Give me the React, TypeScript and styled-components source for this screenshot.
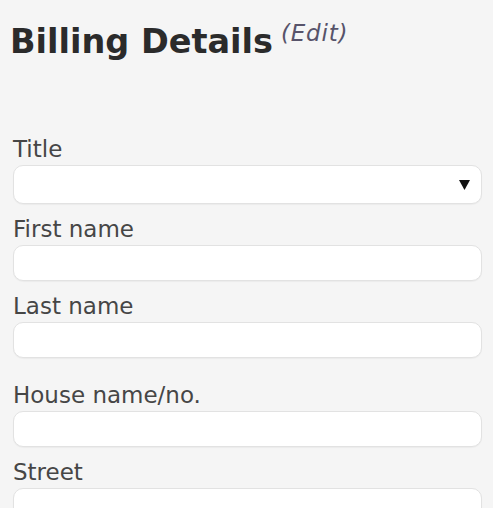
import React from "react";
import styled, { createGlobalStyle } from "styled-components";

const GlobalStyle = createGlobalStyle`
  html, body {
    margin: 0;
    padding: 0;
    background: #f5f5f5;
  }
  body {
    font-family: "DejaVu Sans", Verdana, sans-serif;
  }
`;

const Page = styled.div`
  width: 493px;
  height: 508px;
  overflow: hidden;
  box-sizing: border-box;
  padding: 15px 11px 0 13px;
  display: flex;
  flex-direction: column;
`;

const Heading = styled.h2`
  margin: 0 0 0 -3px;
  font-size: 33.5px;
  line-height: 37px;
  font-weight: bold;
  color: #2b2b2b;
  white-space: nowrap;
`;

const EditLink = styled.span`
  font-size: 23px;
  font-weight: normal;
  font-style: italic;
  letter-spacing: 0.8px;
  color: #57536a;
  margin-left: 8px;
  vertical-align: 12px;
`;

const Form = styled.div`
  margin-top: 76px;
  display: flex;
  flex-direction: column;
`;

const Field = styled.div<{ $extra?: boolean }>`
  display: flex;
  flex-direction: column;
  gap: 3px;
  margin-top: ${(p) => (p.$extra ? "24px" : "12px")};
  &:first-child {
    margin-top: 0;
  }
`;

const Label = styled.label`
  font-size: 23px;
  line-height: 26px;
  color: #464646;
`;

const Box = styled.div<{ $tall?: boolean }>`
  box-sizing: border-box;
  width: 469px;
  height: ${(p) => (p.$tall ? "39px" : "36px")};
  background: #ffffff;
  border: 1px solid #e2e2e2;
  border-radius: 10px;
  box-shadow: 0 1px 1px rgba(0, 0, 0, 0.04);
  display: flex;
  align-items: center;
  justify-content: flex-end;
  padding-right: 11px;
`;

const Arrow = styled.svg`
  width: 11px;
  height: 10px;
  display: block;
`;

const fields: { label: string; select?: boolean; extra?: boolean }[] = [
  { label: "Title", select: true },
  { label: "First name" },
  { label: "Last name" },
  { label: "House name/no.", extra: true },
  { label: "Street" },
];

export default function App() {
  return (
    <>
      <GlobalStyle />
      <Page>
        <Heading>
          Billing Details<EditLink>(Edit)</EditLink>
        </Heading>
        <Form>
          {fields.map((f) => (
            <Field key={f.label} $extra={f.extra}>
              <Label>{f.label}</Label>
              <Box $tall={f.select}>
                {f.select && (
                  <Arrow viewBox="0 0 11 10">
                    <polygon points="0,0 11,0 5.5,10" fill="#111" />
                  </Arrow>
                )}
              </Box>
            </Field>
          ))}
        </Form>
      </Page>
    </>
  );
}
